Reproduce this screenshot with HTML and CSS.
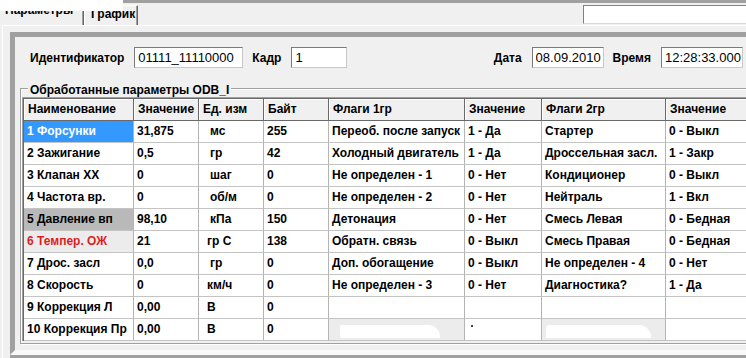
FILE: index.html
```html
<!DOCTYPE html>
<html lang="ru">
<head>
  <meta charset="UTF-8">
  <title>ODB_I - Параметры</title>
  <link rel="stylesheet" href="styles.css">
</head>
<body>
  <div class="mask"></div>
  <div class="window">

    <div class="topbar">
      <div class="tabs">
        <div class="tab active">Параметры</div>
        <div class="tab">График</div>
      </div>
      <input class="search" type="text">
    </div>

    <div class="page">
      <div class="panel">

        <div class="fields">
          <span class="lbl">Идентификатор</span>
          <input class="box w-id" type="text" value="01111_11110000">
          <span class="lbl">Кадр</span>
          <input class="box w-frame" type="text" value="1">
          <span class="spacer"></span>
          <span class="lbl">Дата</span>
          <input class="box w-date" type="text" value="08.09.2010">
          <span class="lbl">Время</span>
          <input class="box w-time" type="text" value="12:28:33.000">
        </div>

        <div class="group">
          <div class="group-title">Обработанные параметры ODB_I</div>
          <div class="grid">
            <table>
              <tr>
                <th class="c1">Наименование</th>
                <th class="c2">Значение</th>
                <th class="c3">Ед. изм</th>
                <th class="c4">Байт</th>
                <th class="c5">Флаги 1гр</th>
                <th class="c6">Значение</th>
                <th class="c7">Флаги 2гр</th>
                <th class="c8">Значение</th>
              </tr>
              <tr>
                <td class="sel">1 Форсунки</td><td>31,875</td><td class="u">мс</td><td>255</td>
                <td>Переоб. после запуск</td><td>1 - Да</td><td>Стартер</td><td>0 - Выкл</td>
              </tr>
              <tr>
                <td>2 Зажигание</td><td>0,5</td><td class="u">гр</td><td>42</td>
                <td>Холодный двигатель</td><td>1 - Да</td><td>Дроссельная засл.</td><td>1 - Закр</td>
              </tr>
              <tr>
                <td>3 Клапан ХХ</td><td>0</td><td class="u">шаг</td><td>0</td>
                <td>Не определен - 1</td><td>0 - Нет</td><td>Кондиционер</td><td>0 - Выкл</td>
              </tr>
              <tr>
                <td>4 Частота вр.</td><td>0</td><td class="u">об/м</td><td>0</td>
                <td>Не определен - 2</td><td>0 - Нет</td><td>Нейтраль</td><td>1 - Вкл</td>
              </tr>
              <tr>
                <td class="dim">5 Давление вп</td><td>98,10</td><td class="u">кПа</td><td>150</td>
                <td>Детонация</td><td>0 - Нет</td><td>Смесь Левая</td><td>0 - Бедная</td>
              </tr>
              <tr>
                <td class="warn">6 Темпер. ОЖ</td><td>21</td><td class="u u2">гр С</td><td>138</td>
                <td>Обратн. связь</td><td>0 - Выкл</td><td>Смесь Правая</td><td>0 - Бедная</td>
              </tr>
              <tr>
                <td>7 Дрос. засл</td><td>0,0</td><td class="u">гр</td><td>0</td>
                <td>Доп. обогащение</td><td>0 - Выкл</td><td>Не определен - 4</td><td>0 - Нет</td>
              </tr>
              <tr>
                <td>8 Скорость</td><td>0</td><td class="u u2">км/ч</td><td>0</td>
                <td>Не определен - 3</td><td>0 - Нет</td><td>Диагностика?</td><td>1 - Да</td>
              </tr>
              <tr>
                <td>9 Коррекция Л</td><td>0,00</td><td class="u u2">В</td><td>0</td>
                <td></td><td></td><td></td><td></td>
              </tr>
              <tr>
                <td>10 Коррекция Пр</td><td>0,00</td><td class="u u2">В</td><td>0</td>
                <td class="smudge"><div class="blob"></div></td><td><span class="dot"></span></td>
                <td class="smudge"><div class="blob b2"></div></td><td></td>
              </tr>
            </table>
          </div>
        </div>

      </div>
      <div class="frame-bottom"></div>
    </div>

  </div>
</body>
</html>
```

FILE: styles.css
```css
* {
  box-sizing: border-box;
}
html, body {
  overflow: hidden;
}
body {
  margin: 0;
  background: #f0f0f0;
  font-family: 'Liberation Sans', Arial, sans-serif;
  font-size: 12px;
  font-weight: bold;
  color: #000;
  position: relative;
}
.mask {
  position: absolute;
  left: 0;
  top: 0;
  width: 123px;
  height: 11px;
  background: #fff;
  z-index: 2;
}
.window {
  width: 780px;
  height: 358px;
}

/* tab strip */
.topbar {
  display: flex;
  height: 25px;
  border-top: 3px solid #a0a0a0;
}
.tabs {
  display: flex;
  align-items: flex-end;
}
.tab {
  height: 20px;
  padding: 1px 6px 0 6px;
  border-left: 1px solid #fff;
  border-top: 1px solid #fff;
  border-right: 1px solid #696969;
  box-shadow: inset -1px 0 #a0a0a0;
  white-space: nowrap;
}
.tab.active {
  width: 84px;
  height: 22px;
  padding: 0 0 0 5px;
  border-left: none;
  border-top: none;
}
.tab.active + .tab {
  width: 54px;
}
.search {
  margin: 2px 0 0 auto;
  width: 197px;
  height: 19px;
  border: 1px solid #d8d8d8;
  border-top-color: #808080;
  border-left-color: #808080;
  background: #fff;
  padding: 0;
}

/* tab page */
.page {
  margin-left: 2px;
  border-top: 1px solid #fff;
  border-left: 1px solid #fff;
  padding: 6px 0 0 7px;
  height: 333px;
}
.panel {
  height: 323px;
  border: 5px solid #fafafa;
  border-top-color: #a0a0a0;
  border-left-color: #a0a0a0;
}
.frame-bottom {
  height: 3px;
  background: #a0a0a0;
}

/* top fields */
.fields {
  display: flex;
  align-items: center;
  padding: 10px 32px 0 15px;
}
.lbl {
  margin-right: 10px;
  white-space: nowrap;
}
.box {
  height: 21px;
  margin-right: 9px;
  padding: 0 0 0 3px;
  border: 1px solid #c8c8c8;
  border-top-color: #7a7a7a;
  border-left-color: #7a7a7a;
  background: #fff;
  font-family: 'Liberation Sans', Arial, sans-serif;
  font-size: 13px;
  font-weight: normal;
  color: #000;
}
.box:last-child {
  margin-right: 0;
}
.w-id { width: 109px; }
.w-frame { width: 56px; }
.w-date { width: 72px; }
.w-time { width: 82px; }
.spacer {
  flex: 1;
}

/* group box */
.group {
  margin: 20px 5px 0 5px;
  height: 256px;
  border: 1px solid #a0a0a0;
  box-shadow: inset 1px 1px #fff, 1px 1px #fff;
  padding: 0 0 0 1px;
}
.group-title {
  width: fit-content;
  margin: -6px 0 0 6px;
  padding: 0 2px;
  line-height: 14px;
  background: #f0f0f0;
}
.grid {
  border-top: 1px solid #a0a0a0;
  border-left: 1px solid #a0a0a0;
}
table {
  width: 100%;
  table-layout: fixed;
  border-collapse: separate;
  border-spacing: 0;
  border-top: 1px solid #696969;
  border-left: 1px solid #696969;
  background: #fff;
}
th, td {
  height: 21px;
  line-height: 21px;
  padding: 0 3px;
  text-align: left;
  white-space: nowrap;
  overflow: hidden;
  font-weight: bold;
}
th {
  background: #f0f0f0;
  border-right: 1px solid #696969;
  border-bottom: 1px solid #696969;
  box-shadow: inset 1px 1px #fff;
  padding-left: 4px;
}
td {
  border-right: 1px solid #b4b4b4;
  border-bottom: 1px solid #c4c4c4;
}
.c1 { width: 110px; }
.c2 { width: 65px; }
.c3 { width: 65px; }
.c4 { width: 65px; }
.c5 { width: 136px; }
.c6 { width: 77px; }
.c7 { width: 124px; }

td.u { padding-left: 11px; }
td.u2 { padding-left: 8px; }
td.sel {
  background: #3399ff;
  color: #fff;
}
td.dim {
  background: #b9b9b9;
}
td.warn {
  background: #ececec;
  color: #dc1e1e;
}
td.smudge {
  background: #ececec;
}
.blob {
  width: 100px;
  height: 13px;
  margin: 4px 0 0 8px;
  background: #fff;
  border-radius: 2px 40px 4px 6px;
}
.blob.b2 {
  width: 105px;
  margin-left: 1px;
  border-radius: 8px 30px 2px 2px;
}
.dot {
  display: inline-block;
  width: 2px;
  height: 2px;
  margin-left: 3px;
  vertical-align: top;
  margin-top: 6px;
  background: #444;
}
```
